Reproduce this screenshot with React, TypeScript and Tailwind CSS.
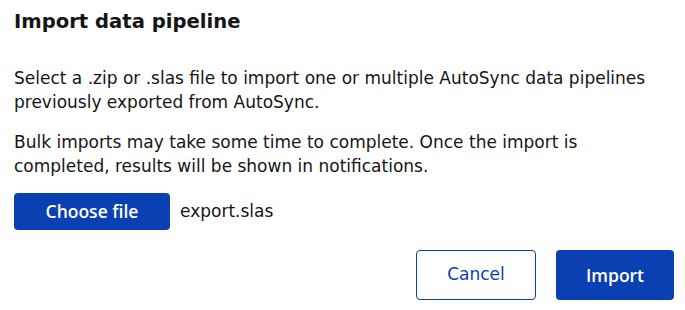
import React from "react";

export default function App() {
  return (
    <div
      className="w-[685px] h-[310px] bg-white text-[#151515] flex flex-col pl-[14px] pr-[11px] pt-[6px]"
      style={{ fontFamily: "'DejaVu Sans', 'Noto Sans', sans-serif" }}
    >
      <h1 className="text-[19.6px] font-bold leading-[32px]">Import data pipeline</h1>
      <p className="mt-[28px] w-[650px] text-[17px] leading-[24px]">
        Select a .zip or .slas file to import one or multiple AutoSync data pipelines previously exported from AutoSync.
      </p>
      <p className="mt-[16px] w-[600px] text-[17px] leading-[24px]">
        Bulk imports may take some time to complete. Once the import is completed, results will be shown in notifications.
      </p>
      <div className="mt-[15px] flex items-center gap-[10px]">
        <button
          className="h-[37px] w-[156px] rounded-[4px] bg-[#0b40b3] text-white text-[17.5px] font-semibold"
          style={{ fontFamily: "'Open Sans', sans-serif" }}
        >
          Choose file
        </button>
        <span className="text-[17px]">export.slas</span>
      </div>
      <div className="mt-[20px] flex justify-end gap-[20px]">
        <button className="h-[50px] w-[120px] rounded-[4px] border border-[#0b40b3] text-[#0b40b3] text-[17px]">
          Cancel
        </button>
        <button
          className="h-[50px] w-[118px] rounded-[4px] bg-[#0b40b3] text-white text-[17.5px] font-semibold"
          style={{ fontFamily: "'Open Sans', sans-serif" }}
        >
          Import
        </button>
      </div>
    </div>
  );
}
